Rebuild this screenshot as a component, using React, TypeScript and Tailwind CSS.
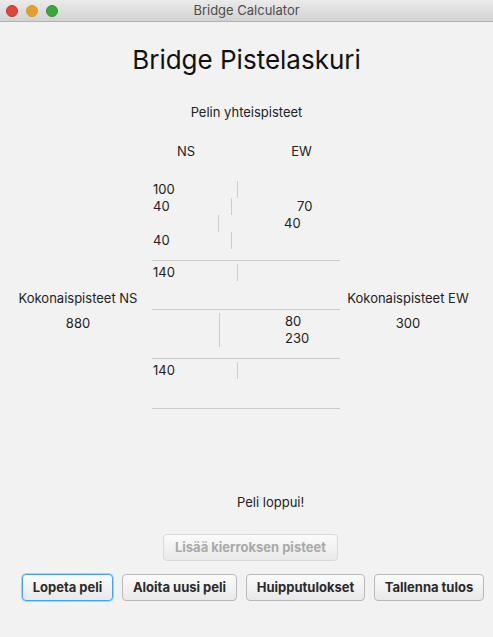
import React from 'react';

type Row = {
  h: string;
  left?: string;
  sepW: string;
  right?: string[];
};

const font = { fontFamily: 'Inter, "Liberation Sans", sans-serif' };

function TableRow({ h, left, sepW, right }: Row) {
  return (
    <div className={`flex ${h}`}>
      <div className={`${sepW} shrink-0 pl-px leading-[17px]`}>{left}</div>
      <div className="w-px shrink-0 bg-[#cdcdcd]" />
      <div className="flex flex-col pl-[65px] leading-[17px]">
        {right?.map((r, i) => (
          <span key={i}>{r}</span>
        ))}
      </div>
    </div>
  );
}

function Rule() {
  return <div className="h-px w-full bg-[#cacaca]" />;
}

function Button({
  children,
  className = '',
  disabled = false,
  focused = false,
}: {
  children: React.ReactNode;
  className?: string;
  disabled?: boolean;
  focused?: boolean;
}) {
  return (
    <button
      disabled={disabled}
      className={
        'flex items-center justify-center rounded-[4px] border bg-gradient-to-b from-[#fbfbfb] to-[#e9e9e9] text-[13px] font-bold ' +
        (disabled
          ? 'border-[#d9d9d9] text-[#a9a9a9] '
          : focused
            ? 'border-[#45a1f2] text-[#2b2b2b] shadow-[0_0_0_1px_#a9d1f7] '
            : 'border-[#b9b9b9] text-[#2b2b2b] ') +
        className
      }
    >
      {children}
    </button>
  );
}

export default function App() {
  return (
    <div className="flex h-[637px] w-[493px] flex-col bg-[#f2f2f2] text-[13px] text-[#222]" style={font}>
      {/* Title bar */}
      <div className="relative flex h-[22px] shrink-0 items-center justify-center border-b border-[#b3b3b3] bg-gradient-to-b from-[#ebebeb] to-[#d2d2d2]">
        <div className="absolute left-[6px] top-[5px] flex gap-[8px]">
          <span className="h-[12px] w-[12px] rounded-full border border-[#c8352b] bg-[#e0443e]" />
          <span className="h-[12px] w-[12px] rounded-full border border-[#d19a26] bg-[#e3a12b]" />
          <span className="h-[12px] w-[12px] rounded-full border border-[#2c9a28] bg-[#3aa73a]" />
        </div>
        <span className="text-[13px] text-[#4d4d4d]">Bridge Calculator</span>
      </div>

      {/* Heading */}
      <div className="mt-[22px] text-center text-[26px] leading-[31px] text-[#111]">Bridge Pistelaskuri</div>
      <div className="mt-[29px] text-center leading-4">Pelin yhteispisteet</div>
      <div className="mt-[23px] flex leading-4">
        <span className="ml-[177px]">NS</span>
        <span className="ml-[96px]">EW</span>
      </div>

      {/* Score grid */}
      <div className="mt-[22px] grid grid-cols-[152px_188px_153px]">
        <div className="flex flex-col items-center pt-[109px] pl-[4px] leading-4">
          <span>Kokonaispisteet NS</span>
          <span className="mt-[9px]">880</span>
        </div>

        <div className="flex flex-col">
          <TableRow h="h-[17px]" left="100" sepW="w-[85px]" />
          <TableRow h="h-[17px]" left="40" sepW="w-[79px]" right={['70']} />
          <TableRow h="h-[17px]" sepW="w-[66px]" right={['40']} />
          <TableRow h="h-[17px]" left="40" sepW="w-[79px]" />
          <div className="mt-[11px]" />
          <Rule />
          <div className="mt-[3px]" />
          <TableRow h="h-[17px]" left="140" sepW="w-[85px]" />
          <div className="mt-[28px]" />
          <Rule />
          <div className="mt-[3px]" />
          <TableRow h="h-[34px]" sepW="w-[67px]" right={['80', '230']} />
          <div className="mt-[11px]" />
          <Rule />
          <div className="mt-[3px]" />
          <TableRow h="h-[17px]" left="140" sepW="w-[85px]" />
          <div className="mt-[29px]" />
          <Rule />
        </div>

        <div className="flex flex-col items-center pt-[109px] pr-[17px] leading-4">
          <span>Kokonaispisteet EW</span>
          <span className="mt-[9px]">300</span>
        </div>
      </div>

      {/* Status and actions */}
      <div className="mt-[85px] pl-[237px] leading-4">Peli loppui!</div>
      <div className="mt-[24px] flex">
        <Button disabled className="ml-[163px] h-[27px] w-[175px]">
          Lisää kierroksen pisteet
        </Button>
      </div>
      <div className="mt-[13px] flex gap-[9px] pl-[22px]">
        <Button focused className="h-[27px] w-[91px]">
          Lopeta peli
        </Button>
        <Button className="h-[27px] w-[115px]">Aloita uusi peli</Button>
        <Button className="h-[27px] w-[119px]">Huipputulokset</Button>
        <Button className="h-[27px] w-[110px]">Tallenna tulos</Button>
      </div>
    </div>
  );
}
